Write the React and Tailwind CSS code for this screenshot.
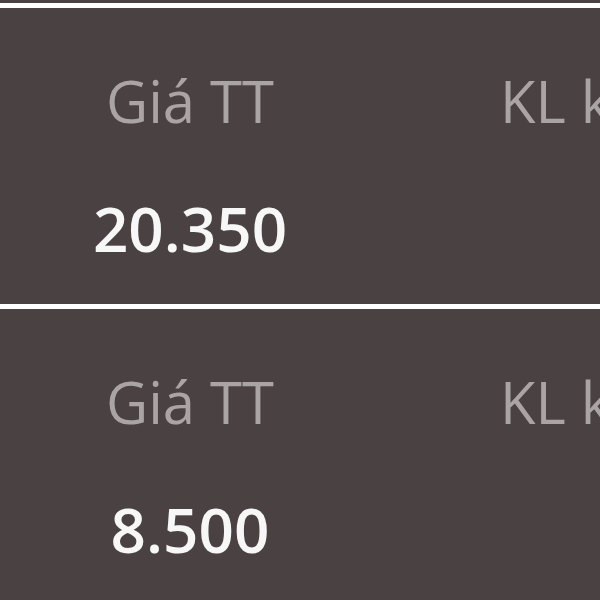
export default function App() {
  const rows = [{ price: '20.350' }, { price: '8.500' }];

  return (
    <div className="w-[600px] h-[600px] overflow-hidden bg-[#4a4143] pt-[3px]" style={{ fontFamily: '"Open Sans", sans-serif' }}>
      {rows.map((row, i) => (
        <div key={i}>
          <div className="h-[5px] bg-white"></div>
          <div className="h-[296px] flex">
            <div className="w-[380px] shrink-0 flex flex-col items-center pt-[64px]">
              <div className="text-[58px] leading-none text-[#aaa4a5]">Giá TT</div>
              <div className="mt-[67px] text-[62px] leading-none font-semibold text-[#f7f7f7]">{row.price}</div>
            </div>
            <div className="flex-1 min-w-0 pl-[120px] pt-[64px]">
              <div className="text-[58px] leading-none text-[#aaa4a5] whitespace-nowrap">KL khớp</div>
            </div>
          </div>
        </div>
      ))}
    </div>
  );
}
